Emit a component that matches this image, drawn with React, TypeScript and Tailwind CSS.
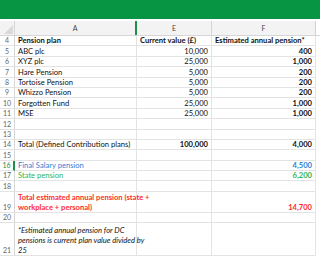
import React from 'react'

type Row = {
  n: number
  h: string
  a?: string[]
  e?: string
  f?: string
  aCls?: string
  eCls?: string
  fCls?: string
  sel?: boolean
}

const rows: Row[] = [
  { n: 4, h: 'h-[10.4px]', a: ['Pension plan'], e: 'Current value (£)', f: 'Estimated annual pension*', aCls: 'font-bold', eCls: 'font-bold text-left', fCls: 'font-bold text-left' },
  { n: 5, h: 'h-[10.4px]', a: ['ABC plc'], e: '10,000', f: '400' },
  { n: 6, h: 'h-[10.4px]', a: ['XYZ plc'], e: '25,000', f: '1,000' },
  { n: 7, h: 'h-[10.4px]', a: ['Hare Pension'], e: '5,000', f: '200' },
  { n: 8, h: 'h-[10.4px]', a: ['Tortoise Pension'], e: '5,000', f: '200' },
  { n: 9, h: 'h-[10.4px]', a: ['Whizzo Pension'], e: '5,000', f: '200' },
  { n: 10, h: 'h-[10.4px]', a: ['Forgotten Fund'], e: '25,000', f: '1,000' },
  { n: 11, h: 'h-[10.4px]', a: ['MSE'], e: '25,000', f: '1,000' },
  { n: 12, h: 'h-[10.4px]' },
  { n: 13, h: 'h-[10.4px]' },
  { n: 14, h: 'h-[10.4px]', a: ['Total (Defined Contribution plans)'], e: '100,000', f: '4,000', eCls: 'font-bold' },
  { n: 15, h: 'h-[10.4px]' },
  { n: 16, h: 'h-[10.4px]', a: ['Final Salary pension'], f: '4,500', aCls: 'text-[#2f7fd6]', fCls: 'text-[#2f7fd6]', sel: true },
  { n: 17, h: 'h-[10.4px]', a: ['State pension'], f: '6,200', aCls: 'text-[#34b44a]', fCls: 'text-[#34b44a]' },
  { n: 18, h: 'h-[10.4px]' },
  { n: 19, h: 'h-[21px]', a: ['Total estimated annual pension (state +', 'workplace + personal)'], f: '14,700', aCls: 'font-bold text-[#ff2b2b]', fCls: 'text-[#ff2b2b]' },
  { n: 20, h: 'h-[10.5px]' },
  { n: 21, h: 'h-[32.5px]', a: ['*Estimated annual pension for DC', 'pensions is current plan value divided by', '25'], aCls: 'italic' },
]

export default function App() {
  return (
    <div
      className="w-[320px] h-[257px] overflow-hidden bg-white text-[7.6px] leading-[10px] text-[#111]"
      style={{ fontFamily: '"Liberation Sans Narrow", Lato, sans-serif' }}
    >
      {/* ribbon strip */}
      <div className="h-[19px] bg-[#079443]" />
      <div className="h-[2px] bg-white" />

      {/* column headers */}
      <div className="flex h-[15px] bg-[#f3f3f3] border-b border-[#d6d6d6] text-[#444] text-[7px]">
        <div className="relative w-[15px] border-r border-[#d6d6d6]">
          <div className="absolute right-[1px] bottom-[1px] w-0 h-0 border-l-[9px] border-l-transparent border-b-[9px] border-b-[#d9d9d9]" />
        </div>
        <div className="w-[122px] flex items-center justify-center border-r-2 border-[#1f8f4a]">A</div>
        <div className="w-[75px] flex items-center justify-center border-r border-[#d6d6d6]">E</div>
        <div className="w-[104px] flex items-center justify-center border-r border-[#c9d4cc]">F</div>
        <div className="flex-1 bg-white" />
      </div>

      {/* sheet rows */}
      {rows.map((r) => (
        <div key={r.n} className={`flex ${r.h}`}>
          <div
            className={`w-[15px] flex items-end justify-center text-[7px] border-b border-[#e3e3e3] ${
              r.sel ? 'border-r-2 border-r-[#1f8f4a] text-[#1f8f4a]' : 'border-r border-r-[#d6d6d6] text-[#666]'
            }`}
          >
            {r.n}
          </div>
          <div className={`w-[122px] flex flex-col justify-end px-[3px] whitespace-nowrap border-b border-r border-[#e3e3e3] ${r.aCls ?? ''}`}>
            {r.a?.map((line) => (
              <span key={line} className="block">{line}</span>
            ))}
          </div>
          <div className={`w-[75px] flex items-end px-[3px] whitespace-nowrap border-b border-r border-[#e3e3e3] ${r.eCls ?? ''}`}>
            <span className={`block w-full ${r.eCls?.includes('text-left') ? 'text-left' : 'text-right'}`}>{r.e}</span>
          </div>
          <div className={`w-[104px] flex items-end px-[3px] whitespace-nowrap border-b border-r border-[#e3e3e3] font-bold ${r.fCls ?? ''}`}>
            <span className={`block w-full ${r.fCls?.includes('text-left') ? 'text-left' : 'text-right'}`}>{r.f}</span>
          </div>
          <div className="flex-1" />
        </div>
      ))}
    </div>
  )
}
